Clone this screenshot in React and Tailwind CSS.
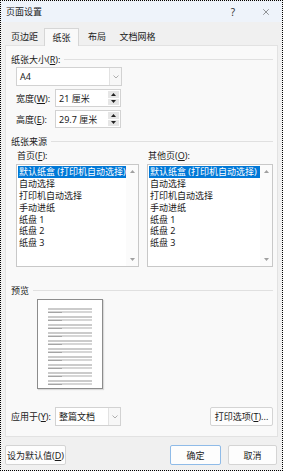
import React from 'react';
import { X } from 'lucide-react';

const sources = ['默认纸盒 (打印机自动选择)', '自动选择', '打印机自动选择', '手动进纸', '纸盘 1', '纸盘 2', '纸盘 3'];

function Section({ children, className = '' }) {
  return (
    <div className={`flex items-center h-[12px] pl-[5px] pr-[4px] ${className}`}>
      <span className="whitespace-nowrap">{children}</span>
      <div className="flex-1 h-px bg-[#e0e0e0] ml-[4px]" />
    </div>
  );
}

function Chevron() {
  return (
    <svg width="6" height="4" viewBox="0 0 6 4">
      <path d="M0.5 0.5 L3 3 L5.5 0.5" fill="none" stroke="#9a9a9a" strokeWidth="0.8" />
    </svg>
  );
}

function Select({ value, width }) {
  return (
    <div className={`flex h-[19px] border border-[#d2d2d2] bg-white ${width}`}>
      <div className="flex-1 flex items-center pl-[3px]">{value}</div>
      <div className="w-[12px] flex items-center justify-center bg-[#f7f7f7] border-l border-[#e2e2e2]">
        <Chevron />
      </div>
    </div>
  );
}

function Spin({ label, value }) {
  return (
    <div className="flex items-center h-[18px] pl-[10px]">
      <div className="w-[39px]">{label}</div>
      <div className="flex w-[66px] h-[18px] border border-[#d2d2d2] bg-white">
        <div className="flex-1 flex items-center pl-[3px]">{value}</div>
        <div className="w-[12px] flex flex-col gap-px bg-white py-px pr-px">
          <div className="flex-1 flex items-center justify-center bg-[#e6e6e6]">
            <svg width="5" height="3" viewBox="0 0 5 3"><path d="M0 3 L2.5 0 L5 3 Z" fill="#222" /></svg>
          </div>
          <div className="flex-1 flex items-center justify-center bg-[#e6e6e6]">
            <svg width="5" height="3" viewBox="0 0 5 3"><path d="M0 0 L2.5 3 L5 0 Z" fill="#222" /></svg>
          </div>
        </div>
      </div>
    </div>
  );
}

function ListBox({ width }) {
  return (
    <div className={`flex h-[103px] border border-[#c8c8c8] bg-white ${width}`}>
      <div className="flex-1 flex flex-col pt-px pl-px">
        {sources.map((s, i) => (
          <div
            key={s}
            className={`h-[11.8px] flex items-center pl-px whitespace-nowrap ${i === 0 ? 'bg-[#0078d7] text-white' : ''}`}
          >
            {s}
          </div>
        ))}
      </div>
      <div className="w-[12px] flex flex-col items-center justify-between py-[5px] bg-[#fbfbfb]">
        <svg width="5" height="3" viewBox="0 0 5 3"><path d="M0 3 L2.5 0 L5 3 Z" fill="#a0a0a0" /></svg>
        <svg width="5" height="3" viewBox="0 0 5 3"><path d="M0 0 L2.5 3 L5 0 Z" fill="#a0a0a0" /></svg>
      </div>
    </div>
  );
}

function PreviewPage() {
  return (
    <div className="ml-[31px] w-[66px] h-[90px] border border-[#8c8c8c] bg-white shadow-[1px_1px_1px_rgba(0,0,0,0.12)] px-[10px] pt-[8px] flex flex-col gap-[3px]">
      {Array.from({ length: 10 }).map((_, i) => (
        <div key={i} className="flex flex-col gap-px">
          <div className="h-[2px] bg-[#cbcbcb]" />
          <div className="relative h-[2px] bg-[#d6d6d6]">
            <div className="absolute left-0 top-[1px] w-[14px] h-px bg-[#a5a5a5]" />
          </div>
        </div>
      ))}
    </div>
  );
}

export default function App() {
  return (
    <div className="w-[283px] h-[471px] border border-dotted border-black bg-[#f0f0f0] flex flex-col text-[9px] leading-none text-[#1a1a1a] font-['Segoe_UI','Noto_Sans','Noto_Sans_CJK_SC',sans-serif]">
      {/* title bar */}
      <div className="h-[21px] flex items-center pl-[5px] bg-[#eef3fa]">
        <span>页面设置</span>
        <span className="ml-auto mr-[26px] text-[10px] text-[#333]">?</span>
        <X size={10} strokeWidth={1.2} className="mr-[11px] text-[#333]" />
      </div>

      {/* tabs */}
      <div className="h-[23px] flex items-end pl-[4px]">
        <div className="w-[39px] h-[18px] flex items-center justify-center">页边距</div>
        <div className="w-[35px] h-[18px] flex items-center justify-center bg-[#f9f9f9] border border-b-0 border-[#d6d6d6] relative top-px">纸张</div>
        <div className="w-[36px] h-[18px] flex items-center justify-center">布局</div>
        <div className="w-[45px] h-[18px] flex items-center justify-center">文档网格</div>
      </div>

      {/* panel */}
      <div className="mx-[4px] h-[392px] border border-[#e2e2e2] bg-[#f9f9f9] flex flex-col">
        <Section className="mt-[7px]">纸张大小(<u>R</u>):</Section>
        <div className="mt-[2px] ml-[10px]">
          <Select value="A4" width="w-[106px]" />
        </div>
        <div className="mt-[3px]"><Spin label={<>宽度(<u>W</u>):</>} value="21 厘米" /></div>
        <div className="mt-[3px]"><Spin label={<>高度(<u>E</u>):</>} value="29.7 厘米" /></div>

        <Section className="mt-[7px]">纸张来源</Section>
        <div className="mt-[4px] flex pl-[11px]">
          <div className="w-[131px]">首页(<u>F</u>):</div>
          <div>其他页(<u>O</u>):</div>
        </div>
        <div className="mt-[4px] flex pl-[10px] gap-[8px]">
          <ListBox width="w-[123px]" />
          <ListBox width="w-[126px]" />
        </div>

        <Section className="mt-[17px]">预览</Section>
        <div className="mt-[3px]">
          <PreviewPage />
        </div>

        <div className="mt-[18px] flex items-center pl-[5px] pr-[4px]">
          <div className="w-[44px]">应用于(<u>Y</u>):</div>
          <Select value="整篇文档" width="w-[66px]" />
          <div className="ml-auto w-[63px] h-[19px] flex items-center justify-center bg-[#fdfdfd] border border-[#d4d4d4] rounded-[2px]">打印选项(<u>T</u>)...</div>
        </div>
      </div>

      {/* bottom buttons */}
      <div className="flex items-center mt-[8px] pl-[4px] pr-[5px]">
        <div className="w-[61px] h-[20px] flex items-center justify-center bg-[#fdfdfd] border border-[#d4d4d4] rounded-[2px] whitespace-nowrap">设为默认值(<u>D</u>)</div>
        <div className="ml-auto w-[51px] h-[20px] flex items-center justify-center bg-[#fdfdfd] border border-[#8fbbe8] rounded-[2px]">确定</div>
        <div className="ml-[7px] w-[49px] h-[20px] flex items-center justify-center bg-[#fdfdfd] border border-[#d4d4d4] rounded-[2px]">取消</div>
      </div>
    </div>
  );
}
